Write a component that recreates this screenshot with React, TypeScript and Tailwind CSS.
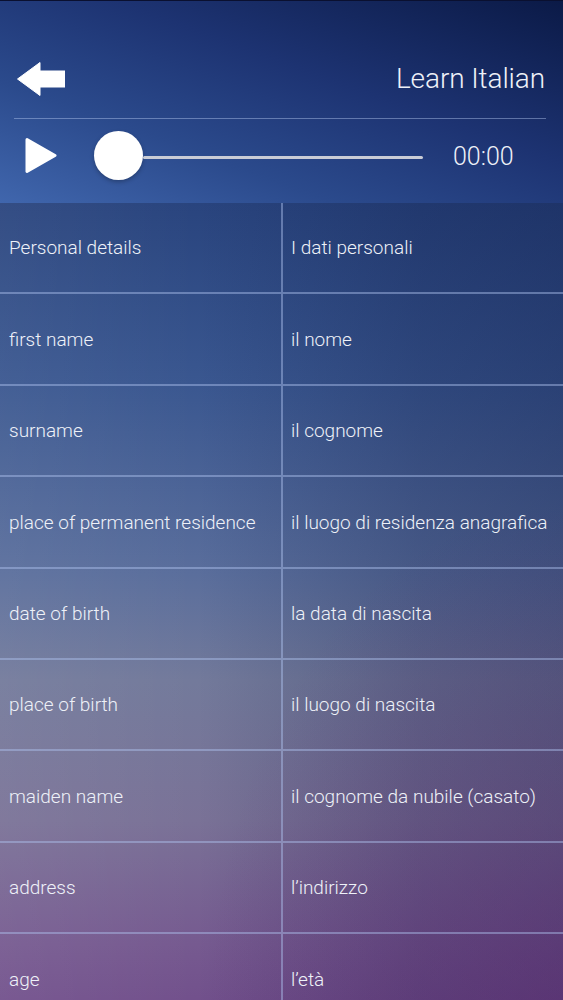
import React from "react";

const rows: [string, string][] = [
  ["Personal details", "I dati personali"],
  ["first name", "il nome"],
  ["surname", "il cognome"],
  ["place of permanent residence", "il luogo di residenza anagrafica"],
  ["date of birth", "la data di nascita"],
  ["place of birth", "il luogo di nascita"],
  ["maiden name", "il cognome da nubile (casato)"],
  ["address", "l\u2019indirizzo"],
  ["age", "l\u2019et\u00e0"],
];

export default function App() {
  return (
    <div className="w-[563px] h-[1000px] overflow-hidden font-['Roboto','Liberation_Sans',sans-serif] font-light text-[#eef1f8] bg-[#0b1230]">
      {/* Header */}
      <div className="h-[203px] flex flex-col border-t border-[#0a1030] bg-[linear-gradient(20deg,#4066ad_0%,#2b4a8c_30%,#1d3372_60%,#0b1a47_100%)]">
        <div className="h-[117px] flex items-center justify-between pt-[38px] pl-[17px] pr-[18px]">
          <svg width="48" height="34" viewBox="0 0 48 34">
            <path d="M0.5 17 L23 0.5 L23 9 L48 9 L48 25 L23 25 L23 33.5 Z" fill="#ffffff" stroke="#ffffff" strokeWidth="1" strokeLinejoin="round" />
          </svg>
          <span className="text-[28px] leading-none tracking-[-0.1px]">Learn Italian</span>
        </div>
        <div className="ml-[14px] mr-[17px] h-px bg-[rgba(180,200,240,0.45)]" />
        <div className="h-[72px] flex items-center pl-[25px]">
          <svg width="32" height="37" viewBox="0 0 32 37">
            <path d="M2 2.5 L30 18.5 L2 34.5 Z" fill="#ffffff" stroke="#ffffff" strokeWidth="3" strokeLinejoin="round" />
          </svg>
          <div className="ml-[37px] flex items-center">
            <div className="w-[49px] h-[49px] rounded-full bg-white shadow-[0_2px_4px_rgba(0,0,0,0.25)]" />
            <div className="w-[280px] h-[3px] mt-[5px] rounded-full bg-[#c9ccd6]" />
          </div>
          <span className="ml-[30px] text-[25px] leading-none mt-[3px]">00:00</span>
        </div>
      </div>
      {/* Table */}
      <div className="bg-[linear-gradient(to_bottom,#29447e_0%,#3a5790_22%,#5a6e9c_45%,#737a9b_58%,#7a7297_75%,#765a90_90%,#704c8a_100%)]">
        <div className="bg-[radial-gradient(ellipse_at_100%_100%,rgba(110,40,120,0.35),rgba(110,40,120,0)_45%),linear-gradient(to_right,rgba(255,255,255,0.05),rgba(255,255,255,0)_35%,rgba(8,18,60,0.24)_75%,rgba(8,18,60,0.32))]">
          {rows.map(([en, it], i) => (
            <div key={i} className="h-[91.4px] flex border-b-2 border-[rgba(175,195,240,0.45)]">
              <div className="w-[283px] shrink-0 flex items-center pl-[9px] border-r-2 border-[rgba(175,195,240,0.45)] text-[19px] pt-[2px]">
                {en}
              </div>
              <div className="flex-1 flex items-center pl-[8px] text-[19px] pt-[2px] whitespace-nowrap">{it}</div>
            </div>
          ))}
        </div>
      </div>
    </div>
  );
}
